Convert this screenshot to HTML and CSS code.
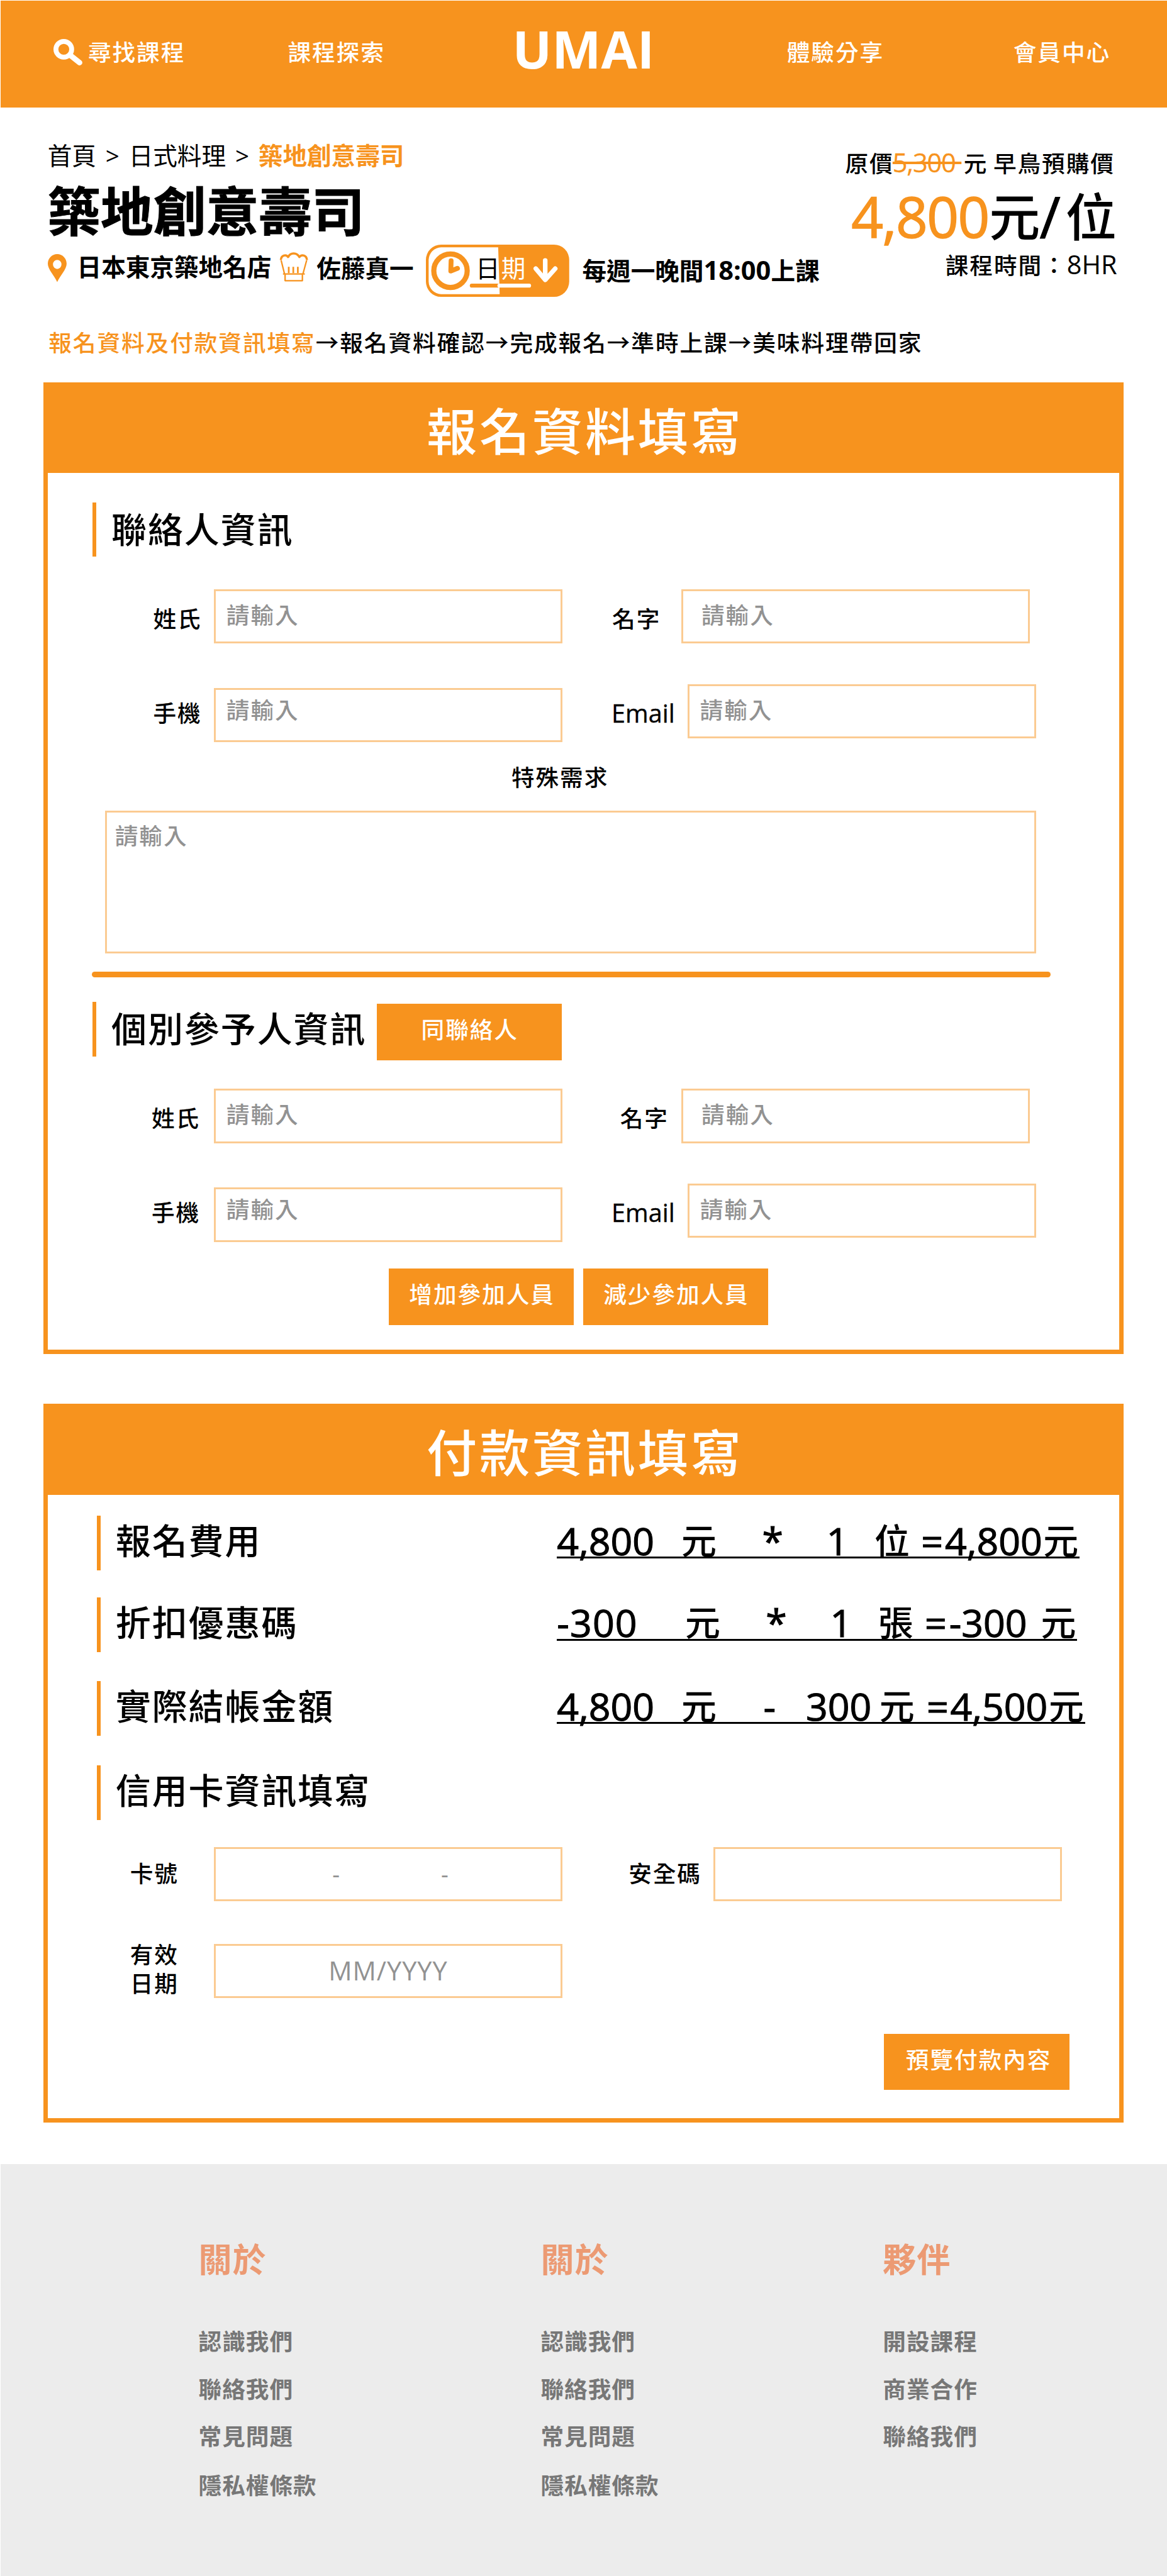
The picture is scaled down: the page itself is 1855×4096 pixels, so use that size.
FILE: index.html
```
<!DOCTYPE html>
<html lang="zh-TW">
<head>
<meta charset="utf-8">
<title>UMAI 報名資料填寫</title>
<link rel="stylesheet" href="styles.css">
</head>
<body>
<header class="nav">
  <a class="nav-item nav-search">
    <svg class="nav-icon" viewBox="0 0 49 45"><circle cx="17" cy="18" r="13" fill="none" stroke="#fff" stroke-width="8"/><path d="M28 28L43 40" stroke="#fff" stroke-width="9" stroke-linecap="round"/></svg>
    <span>尋找課程</span>
  </a>
  <a class="nav-item nav-explore">課程探索</a>
  <a class="logo">UMAI</a>
  <a class="nav-item nav-share">體驗分享</a>
  <a class="nav-item nav-member">會員中心</a>
</header>

<section class="course">
  <div class="course-main">
    <nav class="crumbs"><span>首頁</span><span class="sep">&gt;</span><span>日式料理</span><span class="sep">&gt;</span><span class="current">築地創意壽司</span></nav>
    <h1 class="title">築地創意壽司</h1>
    <div class="info">
      <svg class="pin" viewBox="0 0 31 46"><path fill="#f7931e" fill-rule="evenodd" d="M15.500 0C24 0 31 7 31 16C31 25 20 36 15.500 46C11 36 0 25 0 16C0 7 7 0 15.500 0ZM15.500 9.500A7 7.500 0 1 0 15.500 24.500A7 7.500 0 1 0 15.500 9.500Z"/></svg>
      <span class="info-place">日本東京築地名店</span>
      <svg class="hat" viewBox="0 0 48 50"><g fill="none" stroke="#f7931e" stroke-width="2.400" stroke-linejoin="round"><path d="M8.500 36.500L3 14.500M39 36.500L45 14.500"/><path d="M2.500 14C3 6 11 4 14.500 9C18 1 29 1 33 9C37 4 45 6 45.500 14" stroke-width="3.600"/><path d="M6 37H42"/><path d="M9.500 37.500V48H38V37.500"/><path d="M15.500 25V35.500M23 25V35.500M30.500 25V35.500" stroke-width="2.800"/></g></svg>
      <span class="info-chef">佐藤真一</span>
      <div class="date">
        <svg class="date-art" viewBox="0 0 236 86"><rect width="236" height="86" rx="25" fill="#f7931e"/><path d="M119 4.500H25A21 21 0 0 0 4.500 25V61A21 21 0 0 0 25 81.500H121.500Z" fill="#fff"/><circle cx="40.500" cy="43" r="27.500" fill="none" stroke="#f7931e" stroke-width="8.500"/><path d="M41.500 26.500L41 43.500L52 39" fill="none" stroke="#f7931e" stroke-width="8" stroke-linecap="round" stroke-linejoin="round"/><path d="M75.500 67.500H118" stroke="#f7931e" stroke-width="6.400" stroke-linecap="round"/><path d="M121 67.500H170" stroke="#fff" stroke-width="6.400" stroke-linecap="round"/><path d="M196.500 26V57M181 39.500L196.500 58L213 39.500" fill="none" stroke="#fff" stroke-width="7.600" stroke-linecap="round" stroke-linejoin="round"/></svg>
        <span class="date-text">日<b>期</b></span>
      </div>
      <span class="info-time">每週一晚間<span class="clock">18:00</span>上課</span>
    </div>
  </div>
  <div class="price">
    <div class="price-old">原價<s>5,300&nbsp;</s>元<span class="early">早鳥預購價</span></div>
    <div class="price-now"><em>4,800</em><span class="unit">元</span><span class="slash">/</span><span>位</span></div>
    <div class="price-hours">課程時間：<span class="hr">8HR</span></div>
  </div>
</section>

<div class="steps"><span class="on">報名資料及付款資訊填寫</span><i>→</i>報名資料確認<i>→</i>完成報名<i>→</i>準時上課<i>→</i>美味料理帶回家</div>

<section class="panel panel-form">
  <h2 class="panel-title">報名資料填寫</h2>
  <h3 class="head">聯絡人資訊</h3>
  <div class="row row-first">
    <label>姓氏</label><div class="input">請輸入</div>
    <label class="second">名字</label><div class="input input-name">請輸入</div>
  </div>
  <div class="row row-next">
    <label>手機</label><div class="input input-low">請輸入</div>
    <label class="second mail">Email</label><div class="input input-mail">請輸入</div>
  </div>
  <div class="need">特殊需求</div>
  <div class="area">請輸入</div>
  <div class="rule"></div>
  <div class="head-line">
    <h3 class="head head-people">個別參予人資訊</h3>
    <button class="btn">同聯絡人</button>
  </div>
  <div class="row row-people">
    <label class="nudge">姓氏</label><div class="input">請輸入</div>
    <label class="second third">名字</label><div class="input input-name">請輸入</div>
  </div>
  <div class="row row-next">
    <label class="nudge">手機</label><div class="input input-low">請輸入</div>
    <label class="second mail">Email</label><div class="input input-mail">請輸入</div>
  </div>
  <div class="actions">
    <button class="btn">增加參加人員</button>
    <button class="btn">減少參加人員</button>
  </div>
</section>

<section class="panel panel-pay">
  <h2 class="panel-title">付款資訊填寫</h2>
  <div class="fee">
    <h3 class="head">報名費用</h3>
    <div class="sum sum-a"><span>4,800</span><span>元</span><span>*</span><span>1</span><span>位</span><span>=</span><span>4,800</span><span>元</span></div>
  </div>
  <div class="fee fee-two">
    <h3 class="head">折扣優惠碼</h3>
    <div class="sum sum-b"><span>-300</span><span>元</span><span>*</span><span>1</span><span>張</span><span>=</span><span>-300</span><span>元</span></div>
  </div>
  <div class="fee fee-three">
    <h3 class="head">實際結帳金額</h3>
    <div class="sum sum-c"><span>4,800</span><span>元</span><span>-</span><span>300</span><span>元</span><span>=</span><span>4,500</span><span>元</span></div>
  </div>
  <div class="fee fee-card">
    <h3 class="head">信用卡資訊填寫</h3>
  </div>
  <div class="row card-row">
    <label>卡號</label><div class="input input-card"><span>-</span><span>-</span></div>
    <label class="code">安全碼</label><div class="input input-code"></div>
  </div>
  <div class="row expiry-row">
    <label>有效<br>日期</label><div class="input input-date">MM/YYYY</div>
  </div>
  <div class="submit"><button class="btn">預覽付款內容</button></div>
</section>

<footer class="footer">
  <div class="col"><h4>關於</h4><a>認識我們</a><a>聯絡我們</a><a>常見問題</a><a>隱私權條款</a></div>
  <div class="col"><h4>關於</h4><a>認識我們</a><a>聯絡我們</a><a>常見問題</a><a>隱私權條款</a></div>
  <div class="col"><h4>夥伴</h4><a>開設課程</a><a>商業合作</a><a>聯絡我們</a></div>
</footer>
</body>
</html>
```
FILE: styles.css
```
* { box-sizing: border-box; }
html { font-size: 9.6514px; }
body {
  margin: 0;
  width: 1855px;
  height: 4096px;
  overflow: hidden;
  background: #fff;
  color: #000;
  font-family: "Open Sans", "Noto Sans CJK TC", sans-serif;
  font-size: 3.8rem;
  letter-spacing: .2rem;
  font-weight: 500;
  white-space: nowrap;
  display: flex;
  flex-direction: column;
}
h1, h2, h3, h4 { margin: 0; font-weight: 500; }
b, i, em { font-style: normal; font-weight: inherit; }
svg { display: block; flex: none; }

/* navigation */
.nav {
  flex: none;
  display: flex;
  height: 17.65rem;
  margin: .1rem 0 0 .1rem;
  background: #f7931e;
  color: #fff;
  line-height: 6rem;
  padding: 5.55rem 0 0 8.7rem;
}
.nav-item { width: 16rem; }
.nav-search { display: flex; width: 21.6rem; }
.nav-icon { width: 4.9rem; height: 4.5rem; margin: .7rem .8rem 0 0; }
.nav-explore { margin-left: 17rem; }
.logo {
  width: 23.3rem;
  margin: -.7rem 0 0 21rem;
  font-size: 8.6rem;
  font-weight: 700;
  letter-spacing: 0;
}
.nav-share { margin-left: 21.9rem; }
.nav-member { margin-left: 21.3rem; }

/* course summary */
.course { flex: none; display: flex; justify-content: space-between; height: 33.65rem; padding: 0 8.3rem 0 7.85rem; }
.course-main { padding-top: 4.95rem; }
.crumbs { display: flex; height: 6rem; line-height: 6rem; font-size: 4rem; letter-spacing: 0; font-weight: 400; }
.crumbs .sep { width: 5.36rem; text-align: center; }
.crumbs .current { color: #f7931e; font-weight: 700; }
.title { height: 10rem; margin-top: 1.1rem; line-height: 10rem; font-size: 8.7rem; letter-spacing: 0; font-weight: 700; -webkit-text-stroke: .1rem #000; }
.info { display: flex; height: 8.6rem; margin-top: .5rem; font-size: 4rem; letter-spacing: 0; font-weight: 700; line-height: 6rem; }
.pin { width: 3.1rem; height: 4.6rem; margin-top: 1.6rem; }
.info-place { margin: .7rem 0 0 1.75rem; width: 32rem; }
.hat { width: 4.8rem; height: 5rem; margin: 1.2rem 0 0 1.3rem; }
.info-chef { margin: .9rem 0 0 1.35rem; width: 16rem; }
.date { display: grid; width: 23.6rem; height: 8.6rem; margin-left: 2rem; font-weight: 400; }
.date > * { grid-area: 1 / 1; }
.date-art { width: 23.6rem; height: 8.6rem; }
.date-text { margin: .95rem 0 0 8.2rem; letter-spacing: .2rem; }
.date-text b { color: #fff; }
.info-time { margin: 1.4rem 0 0 2.15rem; }
.clock { display: inline-block; width: 11.1rem; font-size: 4.3rem; line-height: 1; }
.price { padding-top: 6.3rem; width: 44.5rem; }
.price-old { height: 6rem; line-height: 6rem; margin-left: -.2rem; }
.price-old s { display: inline-block; width: 11.7rem; margin-left: -.2rem; color: #f7931e; font-size: 4.3rem; letter-spacing: -.12rem; line-height: 1; font-weight: 400; -webkit-text-stroke: .03rem #f7931e; }
.early { margin-left: .9rem; }
.price-now { display: flex; height: 10rem; margin: .6rem 0 0 .8rem; line-height: 10rem; font-size: 8.4rem; letter-spacing: 0; }
.price-now em { width: 23.3rem; color: #f7931e; font-size: 9.2rem; letter-spacing: -.15rem; -webkit-text-stroke: .16rem #f7931e; }
.unit { width: 8.3rem; }
.slash { width: 4.4rem; font-size: 9.4rem; -webkit-text-stroke: .12rem #000; }
.price-hours { height: 6rem; margin: .2rem 0 0 16.3rem; line-height: 6rem; }
.hr { font-size: 4.3rem; letter-spacing: 0; font-weight: 400; line-height: 1; }
.steps { flex: none; height: 6rem; margin: 2.15rem 0 0 8rem; line-height: 6rem; }
.steps .on { color: #f7931e; }
.steps i { display: inline-block; width: 4rem; line-height: 1; font-family: "Noto Sans CJK TC", sans-serif; }

/* panels */
.panel { flex: none; display: flex; flex-direction: column; width: 178rem; margin-left: 7.1rem; border: 7px solid #f7931e; border-top: 0; }
.panel-form { height: 160.15rem; margin-top: 3.4rem; }
.panel-pay { height: 118.4rem; margin-top: 8.2rem; }
.panel-title {
  height: 15rem;
  line-height: 15.9rem;
  padding-left: .5rem;
  background: #f7931e;
  color: #fff;
  text-align: center;
  font-size: 8.3rem;
  letter-spacing: .4rem;
  flex: none;
}
.head { border-left: .7rem solid #f7931e; height: 9rem; line-height: 8.9rem; padding-left: 2.5rem; font-size: 5.8rem; letter-spacing: .2rem; flex: none; }
.panel-form > .head { margin: 4.8rem 0 0 7.4rem; }
.row { flex: none; display: flex; align-items: flex-start; height: 10rem; line-height: 10rem; padding-left: 17.4rem; }
.row label { width: 10rem; }
.row .nudge { margin-left: -.25rem; width: 10.25rem; }
.row .second { margin-left: 8.2rem; width: 11.4rem; }
.row .third { margin-left: 9.5rem; width: 10.1rem; }
.row .mail { margin-left: 8.1rem; width: 12.5rem; font-size: 4.1rem; letter-spacing: 0; -webkit-text-stroke: .04rem #000; }
.input {
  width: 57.4rem;
  height: 8.95rem;
  margin-top: .15rem;
  padding-left: 1.75rem;
  border: 3px solid #fbcb92;
  color: #929292;
  line-height: 8rem;
}
.input-name { padding-left: 3rem; }
.input-low { margin-top: .8rem; line-height: 6.7rem; }
.row-first { margin-top: 5.2rem; }
.row-next { margin-top: 5.6rem; }
.need { flex: none; margin: 2.6rem 0 0 76.4rem; height: 6rem; line-height: 6rem; }
.area { flex: none; width: 153.3rem; height: 23.5rem; margin: 2.4rem 0 0 9.5rem; padding: 1rem 0 0 1.3rem; border: 3px solid #fbcb92; color: #929292; line-height: 6rem; }
.rule { flex: none; width: 157.9rem; height: .96rem; margin: 3.05rem 0 0 7.35rem; border-radius: .5rem; background: #f7931e; }
.head-line { flex: none; display: flex; margin: 4rem 0 0 7.4rem; height: 9.7rem; }
.head-people { width: 46.8rem; }
.btn { display: block; width: 30.5rem; height: 9.3rem; padding: 0 0 .6rem .2rem; border: 0; background: #f7931e; color: #fff; font: inherit; letter-spacing: inherit; text-align: center; line-height: 8.7rem; }
.head-line .btn { margin-top: .3rem; }
.row-people { margin-top: 4.5rem; }
.actions { flex: none; display: flex; gap: 1.5rem; margin: 4.15rem 0 0 56.2rem; }

/* payment */
.fee { flex: none; display: flex; height: 9rem; margin: 3.4rem 0 0 8.1rem; }
.fee .head { width: 75.8rem; line-height: 8.1rem; padding-left: 2.5rem; }
.fee-two { margin-top: 4.5rem; }
.fee-three { margin-top: 4.75rem; }
.fee-card { margin-top: 4.9rem; }
.sum { display: grid; height: 6rem; margin-top: 1.1rem; line-height: 6rem; font-size: 6.3rem; letter-spacing: 0; border-bottom: .36rem solid #000; -webkit-text-stroke: .12rem #000; }
.sum span:nth-child(2), .sum span:nth-child(5), .sum span:nth-child(8) { font-size: 5.8rem; -webkit-text-stroke: 0; }
.sum-a { grid-template-columns: 20.5rem 13.3rem 10.6rem 7.9rem 7.7rem 3.9rem 16.2rem 6rem; }
.sum-b { grid-template-columns: 21.1rem 13.3rem 10.6rem 7.9rem 7.7rem 4rem 15.1rem 6rem; }
.sum-b span:first-child { letter-spacing: .12rem; }
.sum-c { grid-template-columns: 20.5rem 13.5rem 7rem 12.1rem 7.8rem 3.9rem 16.2rem 6rem; }
.card-row { margin-top: 3.8rem; padding-left: 13.6rem; }
.card-row label:first-child, .expiry-row label { width: 13.8rem; }
.input-card { display: flex; padding-left: 19.2rem; line-height: 8.3rem; }
.input-card span { width: 17.9rem; }
.row .code { margin-left: 10.9rem; width: 14rem; }
.card-row .input, .expiry-row .input { margin-top: .65rem; }
.expiry-row { margin-top: 5.9rem; padding-left: 13.6rem; }
.expiry-row label { line-height: 4.75rem; margin-top: .2rem; }
.row .input-date { margin-top: .7rem; padding-left: 0; text-align: center; font-size: 4.3rem; letter-spacing: .1rem; line-height: 8.1rem; }
.submit { padding: 5.5rem 0 0 137.8rem; }
.submit .btn { padding-left: .6rem; }

/* footer */
.footer { flex: none; display: flex; height: 68rem; margin: 6.8rem 0 0 .1rem; padding: 12.8rem 0 0 32.6rem; background: #ececec; font-weight: 700; }
.col { flex: none; width: 56.35rem; display: flex; flex-direction: column; }
.col h4 { height: 6rem; margin-bottom: 6.6rem; line-height: 6rem; font-size: 5.5rem; letter-spacing: .1rem; font-weight: 700; color: #ec9a73; }
.col a { height: 7.85rem; line-height: 7.85rem; font-size: 3.8rem; letter-spacing: .1rem; color: #777; }
.col a:nth-child(5) { margin-top: .2rem; }
```
